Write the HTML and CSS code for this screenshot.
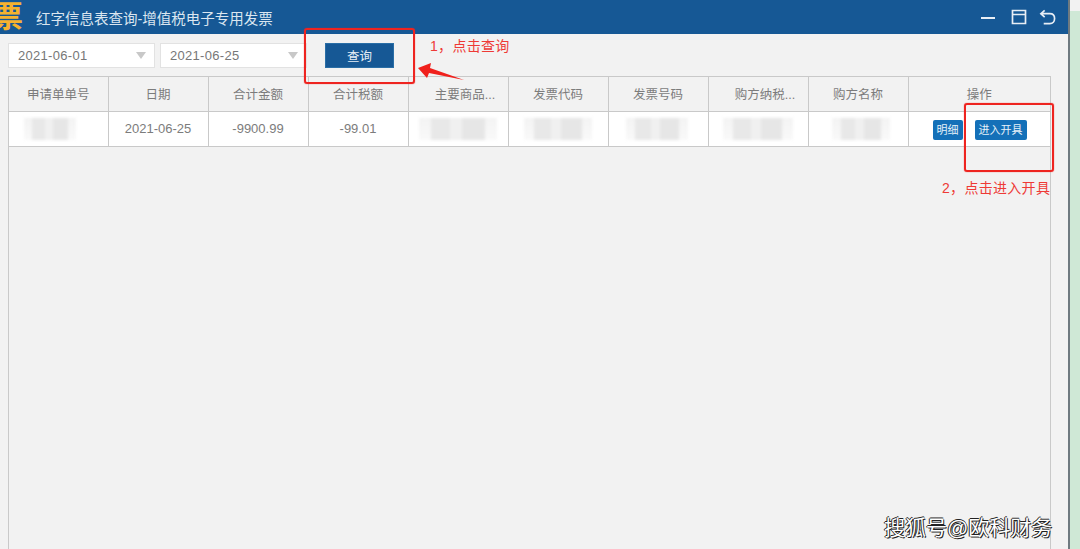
FILE: index.html
```html
<!DOCTYPE html>
<html lang="zh-CN">
<head>
  <meta charset="UTF-8">
  <title>红字信息表查询-增值税电子专用发票</title>
  <link rel="stylesheet" href="styles.css">
</head>
<body>
  <div class="window">
    <!-- Title bar -->
    <header class="titlebar">
      <span class="logo">票</span>
      <span class="title">红字信息表查询-增值税电子专用发票</span>
      <div class="win-icons">
        <svg width="14" height="14" viewBox="0 0 14 14"><path d="M0 8H14" stroke="#e8eef5" stroke-width="2"/></svg>
        <svg width="16" height="16" viewBox="0 0 16 16" fill="none" stroke="#e8eef5" stroke-width="1.7"><path d="M1.5 1.5H14.5V14.5H1.5ZM1.5 5.5H14.5"/></svg>
        <svg width="17" height="17" viewBox="0 0 18 17" fill="none" stroke="#e8eef5" stroke-width="1.8"><path d="M6 1L2 4.5L6 8M2 4.5H11.5C14.5 4.5 16.5 6.5 16.5 9.5C16.5 12.5 14.5 15 11.5 15H5"/></svg>
      </div>
    </header>

    <!-- Search row -->
    <div class="toolbar">
      <div class="date-box"><span>2021-06-01</span><i class="caret"></i></div>
      <div class="date-box"><span>2021-06-25</span><i class="caret"></i></div>
      <button class="search-btn">查询</button>
    </div>

    <!-- Table -->
    <div class="table-wrap">
      <table class="grid">
        <thead>
          <tr>
            <th class="col-first">申请单单号</th>
            <th>日期</th>
            <th>合计金额</th>
            <th>合计税额</th>
            <th class="trunc">主要商品...</th>
            <th>发票代码</th>
            <th>发票号码</th>
            <th class="trunc">购方纳税...</th>
            <th>购方名称</th>
            <th class="col-op">操作</th>
          </tr>
        </thead>
        <tbody>
          <tr>
            <td><div class="mosaic m-apply"></div></td>
            <td>2021-06-25</td>
            <td>-9900.99</td>
            <td>-99.01</td>
            <td><div class="mosaic m-goods"></div></td>
            <td><div class="mosaic m-code"></div></td>
            <td><div class="mosaic m-number"></div></td>
            <td><div class="mosaic m-tax"></div></td>
            <td><div class="mosaic m-name"></div></td>
            <td class="ops"><a class="op-btn">明细</a><a class="op-btn">进入开具</a></td>
          </tr>
        </tbody>
      </table>
    </div>
  </div>
  <div class="side-strip"></div>

  <!-- Red annotations on top of the screenshot -->
  <div class="mark mark-one"></div>
  <div class="mark mark-two"></div>
  <span class="note note-one">1，点击查询</span>
  <span class="note note-two">2，点击进入开具</span>
  <svg class="arrow" width="50" height="20" viewBox="0 0 50 20"><path d="M1 5L14 0L13 5L47 17L12 10L10 15Z" fill="#f0201c"/></svg>

  <div class="watermark">搜狐号@欧科财务</div>
</body>
</html>
```

FILE: styles.css
```css
/* General Styles */
html, body {
  height: 100%;
}

body {
  margin: 0;
  display: flex;
  height: 549px;
  overflow: hidden;
  background-color: #f2f2f2;
  color: #666;
  font-family: "Liberation Sans", "Noto Sans CJK SC", sans-serif;
  font-size: 13px;
}

.window {
  width: 1068px;
  display: flex;
  flex-direction: column;
  background-color: #f2f2f2;
  border-right: 2px solid #6f7a80;
}

.side-strip {
  flex: 1;
  margin-top: 11px;
  background-color: #cfe8d6;
}

/* Title bar */
.titlebar {
  height: 34px;
  flex: none;
  display: flex;
  align-items: center;
  background-color: #165895;
  overflow: hidden;
}

.logo {
  width: 26px;
  margin-left: -7px;
  margin-right: 17px;
  font-size: 30px;
  font-weight: bold;
  line-height: 34px;
  color: #f6b22e;
  white-space: nowrap;
}

.title {
  font-size: 14.5px;
  color: #dbe6f0;
}

.win-icons {
  margin-left: auto;
  margin-right: 12px;
  display: flex;
  align-items: center;
  gap: 16px;
}

.win-icons svg:last-child {
  margin-left: -4px;
}

/* Search row */
.toolbar {
  height: 42px;
  flex: none;
  display: flex;
  align-items: center;
  padding-left: 8px;
  box-sizing: border-box;
}

.date-box {
  width: 147px;
  height: 25px;
  margin-right: 5px;
  padding: 0 8px 0 9px;
  display: flex;
  align-items: center;
  justify-content: space-between;
  box-sizing: border-box;
  background-color: #fff;
  border: 1px solid #e2e2e2;
  font-size: 13px;
  letter-spacing: 0.3px;
  color: #777;
}

.caret {
  width: 0;
  height: 0;
  border-left: 5px solid transparent;
  border-right: 5px solid transparent;
  border-top: 7px solid #c8c8c8;
}

.search-btn {
  width: 69px;
  height: 25px;
  margin-left: 13px;
  padding: 0;
  border: 1px solid #2a6ea6;
  background-color: #165895;
  color: #e4edf5;
  font-family: inherit;
  font-size: 12.5px;
}

/* Table */
.table-wrap {
  flex: 1;
  margin-left: 8px;
  width: 1043px;
  border-left: 1px solid #c9c9c9;
  border-right: 1px solid #c9c9c9;
  border-top: 1px solid #c9c9c9;
  box-sizing: border-box;
}

.grid {
  width: 100%;
  table-layout: fixed;
  border-collapse: collapse;
}

.grid th,
.grid td {
  padding: 0;
  box-sizing: border-box;
  text-align: center;
  border-right: 1px solid #c9c9c9;
  border-bottom: 1px solid #c9c9c9;
  font-weight: normal;
  color: #7c7c7c;
}

.grid th {
  width: 100px;
  height: 34px;
  font-size: 12.5px;
}

.grid th.col-first {
  width: 99px;
}

.grid th.trunc {
  padding-left: 14px;
}

.grid th.col-op {
  width: auto;
  border-right: none;
}

.grid td {
  height: 35px;
  background-color: #fff;
  font-size: 13px;
}

.grid td:last-child {
  border-right: none;
}

/* Blurred out values, a few grey patches on a soft ground */
.mosaic {
  height: 22px;
  margin: 0 auto;
  background-color: #f8f8f8;
  background-image:
    linear-gradient(90deg, transparent 15%, #e8e8e8 15% 40%, #f0f0f0 40% 55%, #e6e6e6 55% 85%, transparent 85%),
    linear-gradient(#f3f3f3, #f9f9f9);
  filter: blur(1.5px);
}

.m-apply { width: 52px; transform: translateX(-8px); }
.m-goods { width: 78px; }
.m-code { width: 68px; }
.m-number { width: 62px; transform: translateX(-1px); }
.m-tax { width: 70px; }
.m-name { width: 58px; transform: translateX(3px); }

.ops {
  white-space: nowrap;
  text-align: left !important;
  padding-left: 24px !important;
}

.op-btn {
  display: inline-block;
  height: 20px;
  line-height: 20px;
  padding: 0 4px;
  margin-right: 12px;
  border-radius: 2px;
  background-color: #1470b8;
  color: #e6f0f8;
  font-size: 11px;
  vertical-align: -5px;
}

/* Annotations */
.mark {
  position: absolute;
  box-sizing: border-box;
  border: 2px solid #ee2420;
  border-radius: 3px;
  box-shadow: 0 0 1px #ee2420;
}

.mark-one {
  left: 304px;
  top: 28px;
  width: 111px;
  height: 56px;
}

.mark-two {
  left: 964px;
  top: 103px;
  width: 90px;
  height: 69px;
}

.note {
  position: absolute;
  font-size: 14px;
  color: #ee3a36;
  white-space: nowrap;
  letter-spacing: 0.3px;
}

.note-one {
  left: 430px;
  top: 35px;
}

.note-two {
  left: 942px;
  top: 177px;
}

.arrow {
  position: absolute;
  left: 417px;
  top: 63px;
}

.watermark {
  position: absolute;
  left: 884px;
  top: 511px;
  font-size: 21px;
  color: #fff;
  text-shadow: 1px 1px 0 #222, -1px 0 0 #222, 0 -1px 0 #222;
  white-space: nowrap;
}
```
